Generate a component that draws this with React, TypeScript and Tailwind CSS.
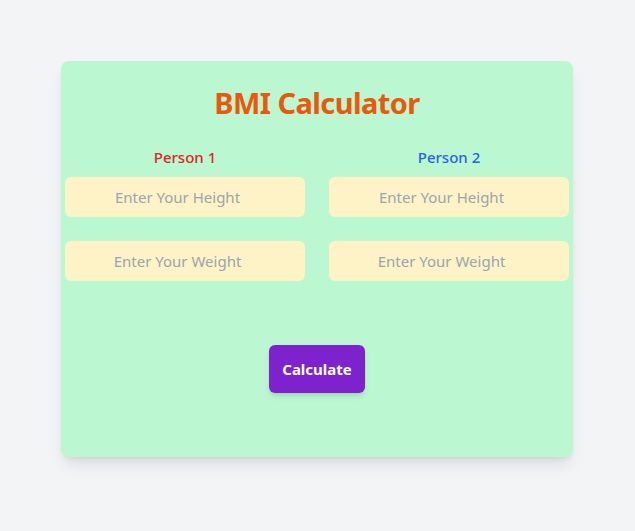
import React from "react";

const inputCls =
  "h-10 w-full rounded-md bg-[#fef3c7] text-center text-[15px] text-gray-700 placeholder:text-[#9ca3af] outline-none";

export default function App() {
  return (
    <div className="min-h-[531px] bg-[#f3f4f6] pt-[61px]" style={{ fontFamily: '"Noto Sans", "Open Sans", sans-serif' }}>
      <div className="ml-[61px] w-[512px] h-[396px] rounded-lg bg-[#bbf7d0] shadow-lg px-1 pt-[24px]">
        <h1 className="text-center text-[29px] tracking-[-0.02em] font-bold text-[#ea580c] leading-9">BMI Calculator</h1>
        <div className="mt-6 grid grid-cols-2 gap-x-6">
          <div className="flex flex-col">
            <p className="text-center text-[15px] font-medium text-[#dc2626] leading-6 mb-2">Person 1</p>
            <input type="number" placeholder="Enter Your Height" className={inputCls} />
            <input type="number" placeholder="Enter Your Weight" className={"mt-6 " + inputCls} />
          </div>
          <div className="flex flex-col">
            <p className="text-center text-[15px] font-medium text-[#2563eb] leading-6 mb-2">Person 2</p>
            <input type="number" placeholder="Enter Your Height" className={inputCls} />
            <input type="number" placeholder="Enter Your Weight" className={"mt-6 " + inputCls} />
          </div>
        </div>
        <div className="mt-16 flex justify-center">
          <button className="h-12 w-24 rounded-md bg-[#7e22ce] text-[15px] font-bold text-white shadow-md">Calculate</button>
        </div>
      </div>
    </div>
  );
}
